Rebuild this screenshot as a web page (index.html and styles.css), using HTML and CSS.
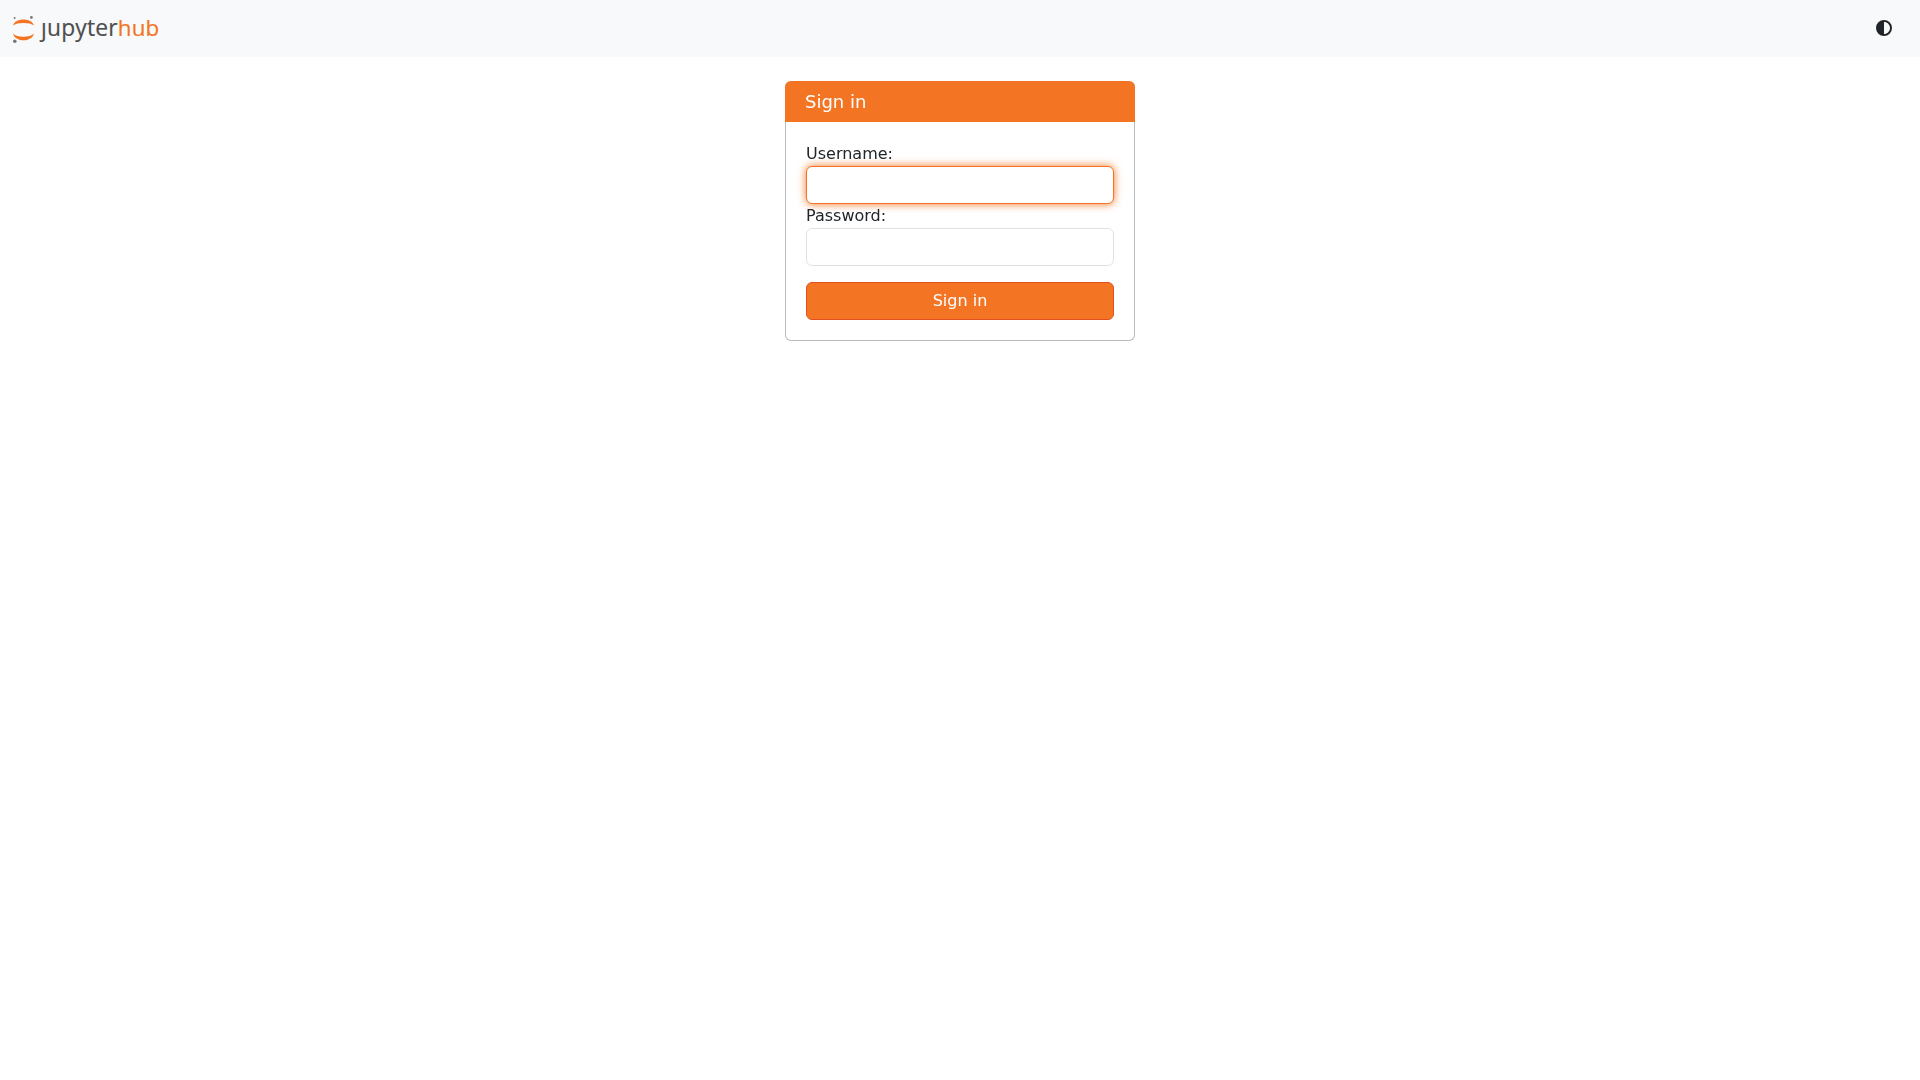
FILE: index.html
```html
<!DOCTYPE html>
<html>
<head>
    <title>JupyterHub</title>
    <link rel="stylesheet" href="styles.css">
</head>
<body>
    <nav class="navbar">
        <a class="brand" href="#">
            <svg class="brand-icon" viewBox="0 0 24 30" width="24" height="30">
                <path class="arc" d="M1 11.5C3 3.4 20 3.4 22 11.5C18 8.2 5 8.2 1 11.5Z"/>
                <path class="arc" d="M1 19.5C3 28.6 20 28.6 22 19.5C18 23.8 5 23.8 1 19.5Z"/>
                <circle class="dot" cx="2.6" cy="4" r="1"/>
                <circle class="dot" cx="19.4" cy="3.4" r="1.4"/>
                <circle class="dot" cx="2.8" cy="27.2" r="1.8"/>
            </svg>
            <span class="brand-text">ȷupyter<span class="brand-hub">hub</span></span>
        </a>
        <button class="theme-toggle" type="button" aria-label="Toggle theme">
            <svg viewBox="0 0 512 512" width="16" height="16">
                <path d="M448 256c0-106-86-192-192-192V448c106 0 192-86 192-192zM0 256a256 256 0 1 1 512 0A256 256 0 1 1 0 256z"/>
            </svg>
        </button>
    </nav>
    <div class="container">
        <form class="login-card">
            <div class="login-header">Sign in</div>
            <div class="login-body">
                <label for="username">Username:</label>
                <input type="text" id="username" class="input input-focus">
                <label for="password">Password:</label>
                <input type="password" id="password" class="input">
                <button type="button" class="btn-signin">Sign in</button>
            </div>
        </form>
    </div>
</body>
</html>
```

FILE: styles.css
```css
body {
    font-family: "DejaVu Sans", sans-serif;
    font-size: 16px;
    line-height: 1.5;
    background-color: #fff;
    color: #212529;
    margin: 0;
    padding: 0;
}

.navbar {
    display: flex;
    align-items: center;
    justify-content: space-between;
    height: 57px;
    padding: 0 12px;
    background-color: #f8f9fa;
}

.brand {
    display: flex;
    align-items: center;
    gap: 5px;
    margin-bottom: 2px;
    text-decoration: none;
}

.brand-icon {
    display: block;
    margin-top: 2px;
}

.arc {
    fill: #f37524;
}

.dot {
    fill: #767677;
}

.brand-text {
    font-family: "Open Sans", sans-serif;
    font-size: 22.8px;
    line-height: 30px;
    letter-spacing: 0.2px;
    -webkit-text-stroke: 0.2px currentColor;
    color: #4e4e4e;
}

.brand-hub {
    font-size: 22.4px;
    color: #f37524;
}

.theme-toggle {
    display: flex;
    margin-right: 16px;
    margin-bottom: 2px;
    padding: 0;
    border: none;
    background: none;
    color: #212529;
}

.theme-toggle svg {
    fill: currentColor;
}

.container {
    display: flex;
    justify-content: center;
    padding-top: 24px;
    will-change: transform; /* keeps the text on its own layer, greyscale antialiasing */
}

.login-card {
    width: 350px;
    box-sizing: border-box;
    border: 1px solid #bbb;
    border-top: none;
    border-radius: 6px;
}

.login-header {
    margin: 0 -1px;
    padding: 10px 20px;
    font-size: 18px;
    line-height: 21px;
    color: #fff;
    background-color: #f37524;
    border-radius: 6px 6px 0 0;
}

.login-body {
    padding: 20px;
}

label {
    display: block;
}

.input {
    display: block;
    box-sizing: border-box;
    width: 100%;
    height: 38px;
    padding: 6px 12px;
    font-size: 16px;
    font-family: inherit;
    color: #212529;
    background-color: #fff;
    border: 1px solid #dee2e6;
    border-radius: 6px;
    outline: none;
}

.input-focus {
    border-color: #f37524;
    box-shadow: 0 0 8px #f37524;
}

.btn-signin {
    display: block;
    box-sizing: border-box;
    width: 100%;
    height: 38px;
    margin-top: 16px;
    padding: 4px 12px 6px;
    font-size: 16px;
    font-family: inherit;
    color: #fff;
    background-color: #f37524;
    border: 1px solid #e34f21;
    border-radius: 6px;
    cursor: pointer;
}
```
